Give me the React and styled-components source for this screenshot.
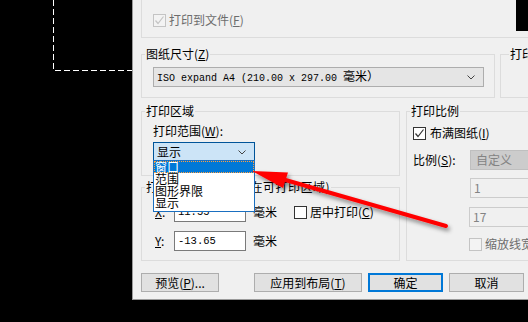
import React from 'react';
import styled, { createGlobalStyle } from 'styled-components';

const GlobalStyle = createGlobalStyle`
  html, body { margin: 0; padding: 0; background: #000; overflow: hidden; }
  body {
    width: 528px; height: 322px;
    font-family: "Noto Sans CJK SC", "Noto Sans", sans-serif;
    font-size: 12px;
  }
`;

const Screen = styled.div`
  position: relative;
  width: 528px;
  height: 322px;
  display: flex;
  align-items: flex-start;
  overflow: hidden;
  background: #000;
`;

const Canvas = styled.div`
  flex: 0 0 132px;
  height: 322px;
  svg { display: block; }
`;

const Dialog = styled.div`
  flex: 0 0 440px;
  height: 300px;
  box-sizing: border-box;
  background: #f0f0f0;
  border-left: 1px solid #9a9a9a;
  border-bottom: 1px solid #9a9a9a;
  padding-left: 8px;
  display: flex;
  flex-direction: column;
  color: #000;
`;

const TopGroup = styled.div`
  height: 38px;
  box-sizing: border-box;
  border: 1px solid #dcdcdc;
  border-top: none;
  display: grid;
  grid-template-columns: 363px auto;
  padding-left: 11px;
`;

const Preview = styled.div`
  width: 20px;
  height: 31px;
  background: #000;
`;

const Row = styled.div`
  display: flex;
  align-items: flex-start;
  gap: ${p => p.$gap ?? 5}px;
  margin-top: ${p => p.$mt ?? 0}px;
`;

const Column = styled.div`
  display: flex;
  flex-direction: column;
  width: ${p => p.$w}px;
  flex: none;
`;

const Group = styled.fieldset`
  margin: 0;
  margin-top: ${p => p.$mt ?? 0}px;
  padding: 0;
  min-width: 0;
  box-sizing: border-box;
  border: 1px solid #dcdcdc;
  width: ${p => (p.$w ? `${p.$w}px` : 'auto')};
  flex: ${p => (p.$w ? 'none' : '1')};
`;

const Legend = styled.legend`
  margin-left: ${p => p.$ml ?? 3}px;
  padding: 0 1px;
  line-height: 16px;
  height: 16px;
  font-size: 12px;
  white-space: nowrap;
  letter-spacing: ${p => p.$ls ?? 0}px;
`;

const GroupBody = styled.div`
  padding: ${p => p.$pad};
  display: flex;
  flex-direction: column;
`;

const Text = styled.div`
  line-height: 16px;
  height: 16px;
  white-space: nowrap;
  width: ${p => (p.$w ? `${p.$w}px` : 'auto')};
  padding-left: ${p => p.$pl ?? 0}px;
  flex: none;
`;

const Spacer = styled.div`
  height: ${p => p.$h}px;
`;

const U = styled.span`
  text-decoration: underline;
  text-underline-offset: 1px;
`;

const CheckRow = styled.div`
  display: flex;
  align-items: center;
  gap: ${p => p.$gap ?? 3}px;
  height: 16px;
  line-height: 16px;
  white-space: nowrap;
  color: ${p => (p.$disabled ? '#6d6d6d' : '#000')};
  margin-top: ${p => p.$mt ?? 0}px;
`;

const Box = styled.span`
  width: 13px;
  height: 13px;
  box-sizing: border-box;
  border: 1px solid ${p => (p.$disabled ? '#c4c4c4' : '#333')};
  background: ${p => (p.$disabled ? '#f3f3f3' : '#fff')};
  display: flex;
  align-items: center;
  justify-content: center;
  flex: none;
`;

function CheckBox({ checked, disabled, gap, mt, children }) {
  return (
    <CheckRow $disabled={disabled} $gap={gap} $mt={mt}>
      <Box $disabled={disabled}>
        {checked && (
          <svg width="11" height="11" viewBox="0 0 11 11">
            <path d="M1.5 5.5 L4 8.5 L9.5 1.5" fill="none" stroke={disabled ? '#c4c4c4' : '#333'} strokeWidth="1.2" />
          </svg>
        )}
      </Box>
      <span>{children}</span>
    </CheckRow>
  );
}

const comboSkins = {
  normal: { bg: '#e5e5e5', border: '#adadad', color: '#000' },
  open: { bg: '#cce4f7', border: '#005499', color: '#000' },
  disabled: { bg: '#cccccc', border: '#bfbfbf', color: '#838383' },
};

const ComboBox = styled.div`
  position: relative;
  width: ${p => p.$w}px;
  height: 20px;
  box-sizing: border-box;
  border: 1px solid ${p => comboSkins[p.$skin].border};
  background: ${p => comboSkins[p.$skin].bg};
  color: ${p => comboSkins[p.$skin].color};
  display: flex;
  align-items: center;
  padding: 0 8px 0 3px;
  flex: none;
  margin-top: ${p => p.$mt ?? 0}px;
`;

const ComboText = styled.span`
  flex: 1;
  white-space: nowrap;
  line-height: 18px;
  padding-left: ${p => p.$pl ?? 0}px;
`;

const MonoText = styled.span`
  font-family: "Liberation Mono", "Noto Sans CJK SC", monospace;
  font-size: 10px;
`;

const CjkText = styled.span`
  font-family: "Noto Sans CJK SC", sans-serif;
  font-size: 12px;
`;

const Chevron = () => (
  <svg width="8" height="5" viewBox="0 0 8 5">
    <path d="M0.5 0.5 L4 4 L7.5 0.5" fill="none" stroke="#444" strokeWidth="1" />
  </svg>
);

const DropList = styled.div`
  position: absolute;
  left: -1px;
  top: calc(100% - 1px);
  width: 102px;
  box-sizing: border-box;
  border: 1px solid #1a6fc0;
  background: #fff;
  padding-bottom: 2px;
  z-index: 2;
`;

const DropItem = styled.div`
  height: 12px;
  line-height: 11px;
  padding-left: 1px;
  box-sizing: border-box;
  overflow: visible;
  white-space: nowrap;
  background: ${p => (p.$active ? '#0078d7' : 'transparent')};
  color: ${p => (p.$active ? '#fff' : '#000')};
  outline: ${p => (p.$active ? '1px dotted #ffa040' : 'none')};
  outline-offset: -1px;
`;

const Field = styled.div`
  width: ${p => p.$w}px;
  height: 20px;
  box-sizing: border-box;
  border: 1px solid ${p => (p.$disabled ? '#cccccc' : '#7a7a7a')};
  background: ${p => (p.$disabled ? '#f0f0f0' : '#fff')};
  color: ${p => (p.$disabled ? '#838383' : '#000')};
  padding-left: 3px;
  line-height: 18px;
  flex: none;
  font-family: ${p => (p.$mono ? '"Liberation Mono", monospace' : '"Noto Sans CJK SC", sans-serif')};
  font-size: ${p => (p.$mono ? '10.5px' : '12px')};
`;

const FieldRow = styled.div`
  display: flex;
  align-items: center;
  margin-top: ${p => p.$mt ?? 0}px;
  padding-left: ${p => p.$pl ?? 0}px;
`;

const Button = styled.div`
  width: ${p => p.$w}px;
  height: 19px;
  box-sizing: border-box;
  border: ${p => (p.$focus ? '2px solid #0078d7' : '1px solid #adadad')};
  background: #e1e1e1;
  display: flex;
  align-items: center;
  justify-content: center;
  white-space: nowrap;
  line-height: 16px;
  margin-right: ${p => p.$mr ?? 0}px;
  flex: none;
`;

const ButtonRow = styled.div`
  display: flex;
  gap: 6px;
  margin-top: 12px;
`;

const Overlay = styled.svg`
  position: absolute;
  left: 0;
  top: 0;
  pointer-events: none;
  z-index: 5;
`;

function RedArrow() {
  return (
    <Overlay width="528" height="322" viewBox="0 0 528 322">
      <defs>
        <filter id="sh" x="-20%" y="-20%" width="140%" height="160%">
          <feDropShadow dx="2" dy="3" stdDeviation="2" floodColor="#000" floodOpacity="0.45" />
        </filter>
      </defs>
      <g filter="url(#sh)" fill="#ff0000">
        <line x1="446" y1="226" x2="282" y2="179" stroke="#ff0000" strokeWidth="4" strokeLinecap="round" />
        <polygon points="252,171 288,172.5 283,188" />
      </g>
    </Overlay>
  );
}

export default function App() {
  return (
    <>
      <GlobalStyle />
      <Screen>
        <Canvas>
          <svg width="132" height="322">
            <path d="M53.5 0 V70.5 H132" fill="none" stroke="#fff" strokeWidth="1" strokeDasharray="6 3" />
          </svg>
        </Canvas>
        <Dialog>
          <TopGroup>
            <CheckBox disabled checked mt={12}>打印到文件(<U>F</U>)</CheckBox>
            <Preview />
          </TopGroup>

          <Row $mt={8} $gap={5}>
            <Group $w={354}>
              <Legend>图纸尺寸(<U>Z</U>)</Legend>
              <GroupBody $pad="5px 10px 10px 11px">
                <ComboBox $w={331} $skin="normal">
                  <ComboText>
                    <MonoText>ISO expand A4 (210.00 x 297.00 </MonoText>
                    <CjkText>毫米）</CjkText>
                  </ComboText>
                  <Chevron />
                </ComboBox>
              </GroupBody>
            </Group>
            <Group>
              <Legend $ml={8}>打印份数(<U>B</U>)</Legend>
              <GroupBody $pad="5px 10px 10px 11px">
                <Spacer $h={20} />
              </GroupBody>
            </Group>
          </Row>

          <Row $mt={5} $gap={6}>
            <Column $w={259}>
              <Group>
                <Legend>打印区域</Legend>
                <GroupBody $pad="4px 10px 13px 11px">
                  <Text>打印范围(<U>W</U>):</Text>
                  <ComboBox $w={102} $skin="open" $mt={3}>
                    <ComboText>显示</ComboText>
                    <Chevron />
                    <DropList>
                      <DropItem $active>窗口</DropItem>
                      <DropItem>范围</DropItem>
                      <DropItem>图形界限</DropItem>
                      <DropItem>显示</DropItem>
                    </DropList>
                  </ComboBox>
                </GroupBody>
              </Group>
              <Group $mt={3}>
                <Legend $ls={0.5}>打印偏移(原点设置在可打印区域)</Legend>
                <GroupBody $pad="7px 10px 9px 13px">
                  <FieldRow>
                    <Text $w={19}><U>X</U>:</Text>
                    <Field $w={72} $mono>11.55</Field>
                    <Text $w={41} $pl={7}>毫米</Text>
                    <CheckBox gap={3}>居中打印(<U>C</U>)</CheckBox>
                  </FieldRow>
                  <FieldRow $mt={9}>
                    <Text $w={19}><U>Y</U>:</Text>
                    <Field $w={72} $mono>-13.65</Field>
                    <Text $pl={7}>毫米</Text>
                  </FieldRow>
                </GroupBody>
              </Group>
            </Column>
            <Group>
              <Legend>打印比例</Legend>
              <GroupBody $pad="6px 0 8px 6px">
                <CheckBox checked gap={4}>布满图纸(<U>I</U>)</CheckBox>
                <FieldRow $mt={9}>
                  <Text $w={57}>比例(<U>S</U>):</Text>
                  <ComboBox $w={110} $skin="disabled">
                    <ComboText $pl={2}>自定义</ComboText>
                  </ComboBox>
                </FieldRow>
                <FieldRow $mt={8} $pl={57}>
                  <Field $w={110} $disabled>1</Field>
                </FieldRow>
                <FieldRow $mt={9} $pl={56}>
                  <Field $w={110} $disabled>17</Field>
                </FieldRow>
                <FieldRow $mt={9} $pl={56}>
                  <CheckBox disabled gap={3}>缩放线宽(<U>L</U>)</CheckBox>
                </FieldRow>
              </GroupBody>
            </Group>
          </Row>

          <ButtonRow>
            <Button $w={78} $mr={29}>预览(<U>P</U>)...</Button>
            <Button $w={108}>应用到布局(<U>T</U>)</Button>
            <Button $w={75} $focus>确定</Button>
            <Button $w={75}>取消</Button>
            <Button $w={75}>帮助(<U>H</U>)</Button>
          </ButtonRow>
        </Dialog>
        <RedArrow />
      </Screen>
    </>
  );
}
